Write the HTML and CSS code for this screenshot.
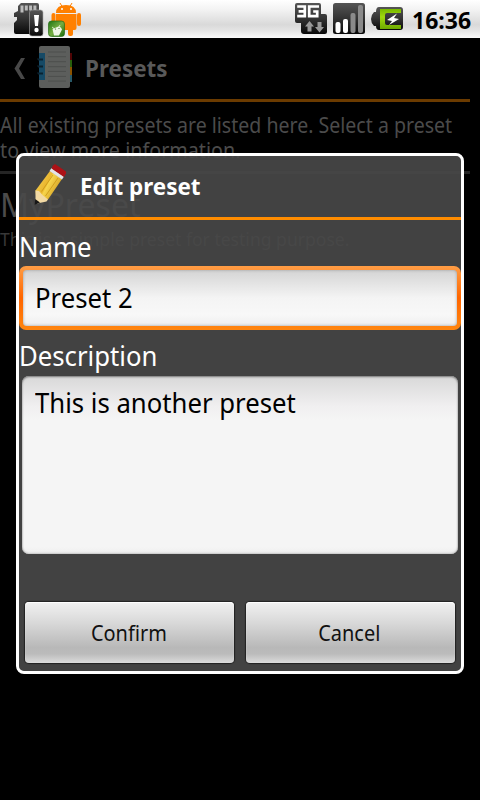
FILE: index.html
```
<!DOCTYPE html>
<html lang="en">
<head>
<meta charset="utf-8">
<title>Presets</title>
<link rel="stylesheet" href="styles.css">
</head>
<body>
<header class="status">
  <svg class="notices" width="82" height="38" viewBox="0 0 82 38">
    <defs>
      <linearGradient id="dark" x2="0" y2="1"><stop stop-color="#555"/><stop offset=".5" stop-color="#333"/><stop offset="1" stop-color="#080808"/></linearGradient>
      <linearGradient id="green" x2="1" y2="1"><stop stop-color="#1d7412"/><stop offset=".5" stop-color="#75ad42"/><stop offset="1" stop-color="#176b0a"/></linearGradient>
    </defs>
    <path d="M21 3h16q2 0 2 2v27q0 2-2 2H16q-2 0-2-2V23l3-3v-3h-3v-4l4-2V6z" fill="url(#dark)"/>
    <path d="M20.500 5.500h3v7h-3zm4.300 0h3v5h-3zm4.300 0h3v5h-3zm4.300 0h3v5h-3z" fill="#bbb"/>
    <rect x="29.500" y="10" width="13.500" height="26" rx="2.500" fill="url(#dark)" stroke="#aaa" stroke-width=".6"/>
    <path d="M34 15h5l-1 11h-3z" fill="#fff"/><circle cx="36.500" cy="30" r="2.200" fill="#fff"/>
    <g fill="#ff8000"><path d="M56 13q0-8 10-8t10 8z"/><path d="M56 14h20.500v14q0 2-2 2H58q-2 0-2-2z"/><rect x="51.500" y="13" width="4" height="12" rx="2"/><rect x="77" y="13" width="4" height="13" rx="2"/><rect x="59" y="27" width="5" height="9" rx="2"/><rect x="68" y="27" width="5" height="9" rx="2"/><path d="m60 3 3 5m9-5-3 5" stroke="#ff8000"/></g>
    <circle cx="62" cy="9" r="1" fill="#fff"/><circle cx="71" cy="9" r="1" fill="#fff"/>
    <rect x="48.500" y="21" width="16" height="15.500" rx="3" fill="url(#green)" stroke="#276b16" stroke-width=".7"/>
    <path d="m52.500 29 6-2.500q3 .5 3.500 3l-3 6h-5z" fill="#eef5e5"/><path d="m52 27 2 1.500m6-3.500-1 2" stroke="#eef5e5" stroke-width=".8"/><circle cx="55.500" cy="29" r=".6" fill="#387622"/><circle cx="59" cy="28.500" r=".6" fill="#387622"/>
  </svg>
  <svg class="signals" width="110" height="38" viewBox="295 0 110 38">
    <defs><linearGradient id="batt" x2="0" y2="1"><stop stop-color="#78b900"/><stop offset=".4" stop-color="#a0d90e"/><stop offset="1" stop-color="#6eaa00"/></linearGradient></defs>
    <path d="M297 3h22q2 0 2 2v9h4q2 0 2 2v16q0 2-2 2h-21q-3 0-3-3v-8h-4q-2 0-2-2V5q0-2 2-2z" fill="url(#dark)"/>
    <path d="M297.200 6.500h7.600v9.600h-7.600m1.400-4.800h6M319 6.500h-9.800v9.600h8v-4.600h-4" fill="none" stroke="#fff" stroke-width="2.700"/>
    <path d="m309.500 21 4.500 5.500h-2.500v5h-4v-5H305zm10 11.500-4.500-5.500h2.500v-5h4v5h2.500z" fill="#999"/>
    <rect x="333" y="3" width="32" height="31" rx="2.500" fill="url(#dark)"/>
    <rect x="335.500" y="22" width="5" height="11" rx="2" fill="#fff"/><rect x="343" y="19" width="5" height="14" rx="2" fill="#fff"/><rect x="350.500" y="13" width="5" height="20" rx="2" fill="#8a8a8a"/><rect x="358" y="5" width="5" height="28" rx="2" fill="#8a8a8a"/>
    <path d="M379 7h21q3 0 3 3v17q0 3-3 3h-21q-3 0-3-4h-2q-3-3-3-7t3-7h2q0-5 3-5z" fill="url(#dark)"/>
    <path d="M380 9h21v4h-14q-2 0-2 2v8q0 2 2 2h14v4h-21z" fill="url(#batt)"/>
    <path d="m397 13.500-10 6.500 5 1-3 4 10-6-5-1z" fill="#fff"/>
  </svg>
  <span class="clock">16:36</span>
</header>
<main class="page">
  <div class="titlebar">
    <svg width="80" height="60" viewBox="0 38 80 60">
      <path d="M21 58h4l-6 10.500L25 79h-4l-6.500-10.500z" fill="#484848"/>
      <rect x="68" y="53" width="4" height="7" fill="#500505"/><rect x="68" y="60" width="4" height="7" fill="#285f0b"/><rect x="68" y="67" width="4" height="8" fill="#8a5200"/><rect x="68" y="75" width="4" height="7" fill="#285968"/>
      <rect x="39" y="46" width="31" height="42" rx="2" fill="#5c5e5c"/><path d="M39 53h6v27h-6z" fill="#164a66"/>
      <path d="M37 59h6m-5 1h5m-6 6h6m-5 1h5m-6 6h6m-5 1h5" stroke="#0a2230" stroke-width="1.200"/>
      <path d="M48 52h18m-18 4.700h18m-18 5h18m-18 5h18m-18 4.700h18m-18 5h18m-18 4.700h18" stroke="#4d4f4d"/>
    </svg>
    <h1 class="title"><span>Presets</span></h1>
  </div>
  <p class="intro"><span>All existing presets are listed here. Select a preset</span><br><span class="second">to view more information.</span></p>
  <div class="item">
    <h2 class="item-name"><span>MyPreset</span></h2>
    <p class="item-text"><span>This is a simple preset for testing purpose.</span></p>
  </div>
</main>
<section class="dialog">
  <div class="dialog-head">
    <svg width="60" height="61" viewBox="19 156 60 61">
      <defs><linearGradient id="wood" x2="1" y2=".6"><stop stop-color="#f8d760"/><stop offset=".5" stop-color="#e9b62e"/><stop offset=".55" stop-color="#f7d54c"/><stop offset="1" stop-color="#ce981e"/></linearGradient></defs>
      <path d="m50 171 12 8-14 20.500-6 1-6-5-.5-5z" fill="url(#wood)"/>
      <path d="m35.500 190.500 3.500.5 3.500 4 5.500 4.500-1.500 2-9.500 2-1.500-2z" fill="#f2d9a4"/>
      <path d="m35.200 199 4.800 3.500-5.300 2.200z" fill="#171717"/>
      <path d="m51.500 168 12.500 8.500-2 3-12.500-8.500z" fill="#e4e4e4"/>
      <path d="m53 165.500 2-1.500 11 7.500v2l-2 3.500-12.500-8.500z" fill="#ac1116"/>
      <path d="m53 175-11.500 16.500M58 178l-12.500 18" stroke="#c99517" stroke-width=".8"/>
    </svg>
    <h2 class="dialog-title"><span>Edit preset</span></h2>
  </div>
  <label class="label name-label"><span>Name</span></label>
  <div class="field focused"><span>Preset 2</span></div>
  <label class="label desc-label"><span>Description</span></label>
  <div class="field area"><span>This is another preset</span></div>
  <div class="actions">
    <button class="button"><span>Confirm</span></button>
    <button class="button"><span>Cancel</span></button>
  </div>
</section>
</body>
</html>
```
FILE: styles.css
```
* { box-sizing: border-box; }
body { margin: 0; width: 480px; height: 800px; overflow: hidden; background: #000; font-family: "Noto Sans", sans-serif; }
h1, h2, p { margin: 0; }
svg { display: block; flex: none; }
span { display: inline-block; white-space: nowrap; transform: scaleX(.952); transform-origin: left; }

.status { height: 38px; display: flex; background: linear-gradient(#fff, #f3f3f3 25%, #d9d9d9 65%, #e4e4e4 80%, #fafafa); }
.signals { margin-left: 213px; }
.clock { margin-left: 7px; font-size: 23px; line-height: 40px; font-weight: 700; color: #000; transform: none; }

.page { width: 470px; color: #4b4b4b; }
.titlebar { height: 64px; display: flex; border-bottom: 3px solid #6b3b00; }
.title { margin-left: 5px; font-size: 23px; line-height: 61px; color: #595959; }
.title span, .dialog-title span { transform: scaleX(.975); }
.intro { height: 69px; padding-top: 11px; font-size: 21px; line-height: 25px; white-space: nowrap; }
.intro span { transform: scaleX(.931); }
.intro .second { transform: scaleX(.94); }
.item { border-top: 3px solid #252525; padding-top: 9px; }
.item-name { font-size: 33px; line-height: 44px; font-weight: 400; }
.item-name span { transform: scaleX(.972); }
.item-text { font-size: 18px; line-height: 24px; color: #383838; white-space: nowrap; }
.item-text span { transform: scaleX(.975); }

.dialog { position: absolute; left: 16px; top: 153px; width: 448px; height: 521px; border: 3px solid #fff; border-radius: 8px; background: rgba(73, 73, 73, .905); background-clip: padding-box; display: flex; flex-direction: column; }
.dialog-head { height: 64px; display: flex; border-bottom: 3px solid #ff8c00; }
.dialog-title { margin-left: 1px; font-size: 23px; line-height: 61px; color: #fff; }
.label { display: block; align-self: flex-start; color: #fff; font-size: 27px; white-space: nowrap; }
.name-label { height: 46px; line-height: 54px; }
.desc-label { height: 46px; line-height: 52px; }
.field { color: #000; font-size: 27px; }
.focused { position: relative; height: 64px; padding: 0 16px; line-height: 64px; border-radius: 7px; background: linear-gradient(#ff9d45, #f60 50%, #ff8610); z-index: 0; }
.focused::before { content: ""; position: absolute; inset: 4px; z-index: -1; border-radius: 4px; background: linear-gradient(#d4d4d4, #f4f4f4 50%, #f8f8f8 80%, #eee); box-shadow: inset 0 0 3px #999; }
.area { height: 178px; margin: 0 3px; padding: 0 13px; line-height: 54px; border-radius: 7px; background: linear-gradient(#d8d8d8, #f0eff0 17%, #f5f5f5 25%, #f5f5f5 96%, #eee); box-shadow: inset 0 1px 2px #777, inset 0 -1px 2px #ccc; }
.actions { display: flex; gap: 12px; margin: 48px 6px 0; }
.button { flex: 1; height: 61px; padding: 0 2px 2px 0; border: 0; border-radius: 4px; background: linear-gradient(#f1f1f1, #d8d8d8 35%, #b8b8b8 75%, #bbb 85%, #dcdcdc); box-shadow: 0 0 1px 1px #222, inset 0 1px 1px #fff; font: 22px "Noto Sans", sans-serif; color: #111; }
.button span { transform: scaleX(.907); transform-origin: center; }
```
